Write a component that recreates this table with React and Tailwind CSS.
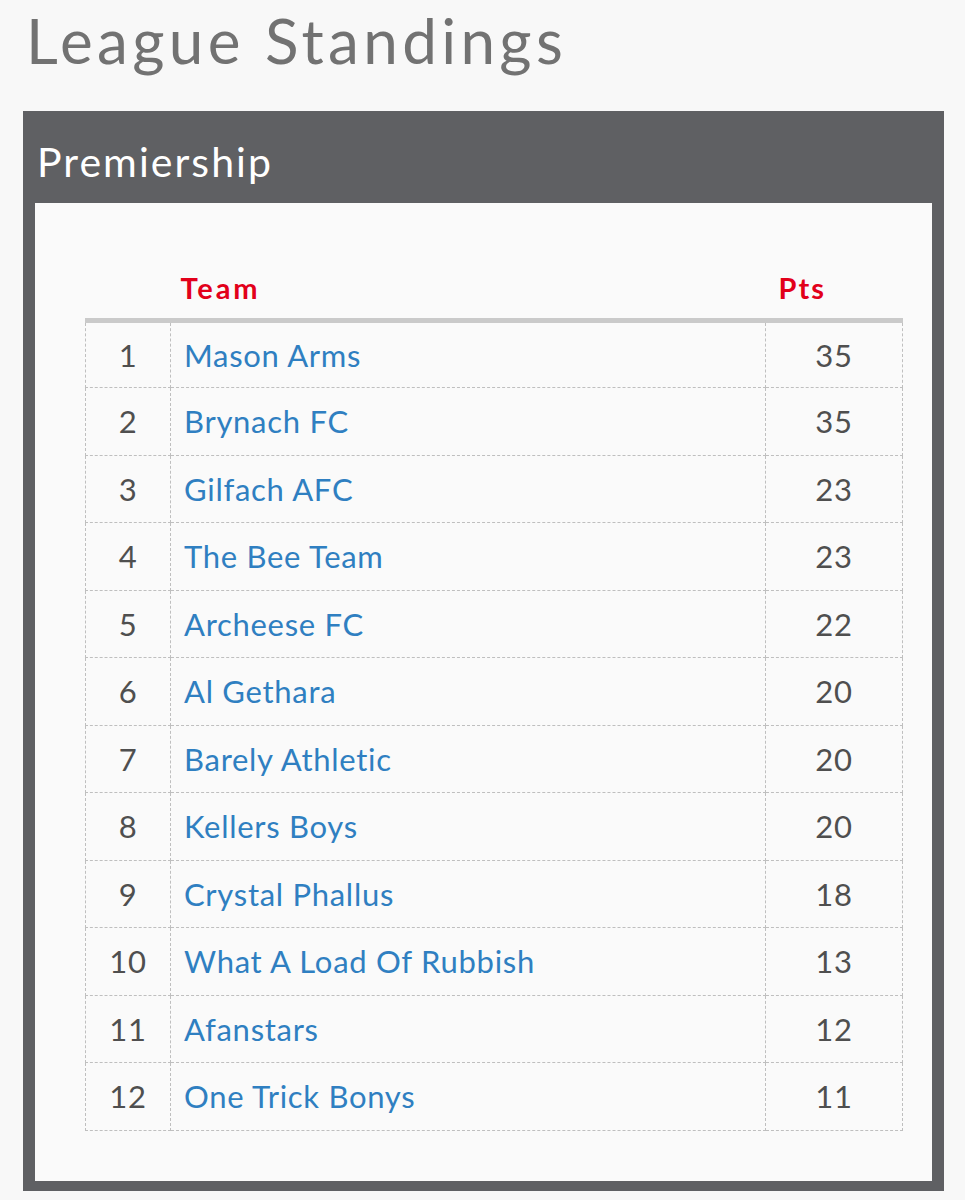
const standings = [
  { pos: 1, team: "Mason Arms", pts: 35 },
  { pos: 2, team: "Brynach FC", pts: 35 },
  { pos: 3, team: "Gilfach AFC", pts: 23 },
  { pos: 4, team: "The Bee Team", pts: 23 },
  { pos: 5, team: "Archeese FC", pts: 22 },
  { pos: 6, team: "Al Gethara", pts: 20 },
  { pos: 7, team: "Barely Athletic", pts: 20 },
  { pos: 8, team: "Kellers Boys", pts: 20 },
  { pos: 9, team: "Crystal Phallus", pts: 18 },
  { pos: 10, team: "What A Load Of Rubbish", pts: 13 },
  { pos: 11, team: "Afanstars", pts: 12 },
  { pos: 12, team: "One Trick Bonys", pts: 11 },
]

export default function App() {
  return (
    <div className="min-h-[1200px] w-[965px] bg-[#f8f8f8] font-['Lato',sans-serif]">
      <h1 className="pl-[26px] pt-[4px] h-[111px] text-[62px] leading-[72px] tracking-[0.07em] text-[#727272]">
        League Standings
      </h1>

      <div className="ml-[23px] w-[921px] bg-[#5f6063] px-[12px] pb-[10px]">
        <h2 className="h-[92px] pt-[27px] pl-[2px] text-[41px] leading-[48px] tracking-[0.05em] text-white">Premiership</h2>

        <div className="bg-[#fafafa] pt-[55px] pb-[50px]">
          <table className="ml-[50px] w-[818px] border-collapse text-[31px] tracking-[0.023em]">
            <thead>
              <tr className="h-[62px] border-b-[5px] border-[#cacaca]">
                <th className="w-[85px]"></th>
                <th className="text-left pl-[10px] font-bold text-[29px] tracking-[0.1em] text-[#e2001a]">Team</th>
                <th className="w-[137px] text-left pl-[13px] font-bold text-[29px] tracking-[0.07em] text-[#e2001a]">Pts</th>
              </tr>
            </thead>
            <tbody>
              {standings.map((row) => (
                <tr key={row.pos} className="h-[67.5px]">
                  <td className="border border-dashed border-[#bfbfbf] text-center text-[#4f4f4f]">{row.pos}</td>
                  <td className="border border-dashed border-[#bfbfbf] pl-[13px] text-[#2f7fc1]">{row.team}</td>
                  <td className="border border-dashed border-[#bfbfbf] text-center text-[#4f4f4f]">{row.pts}</td>
                </tr>
              ))}
            </tbody>
          </table>
        </div>
      </div>
    </div>
  )
}
